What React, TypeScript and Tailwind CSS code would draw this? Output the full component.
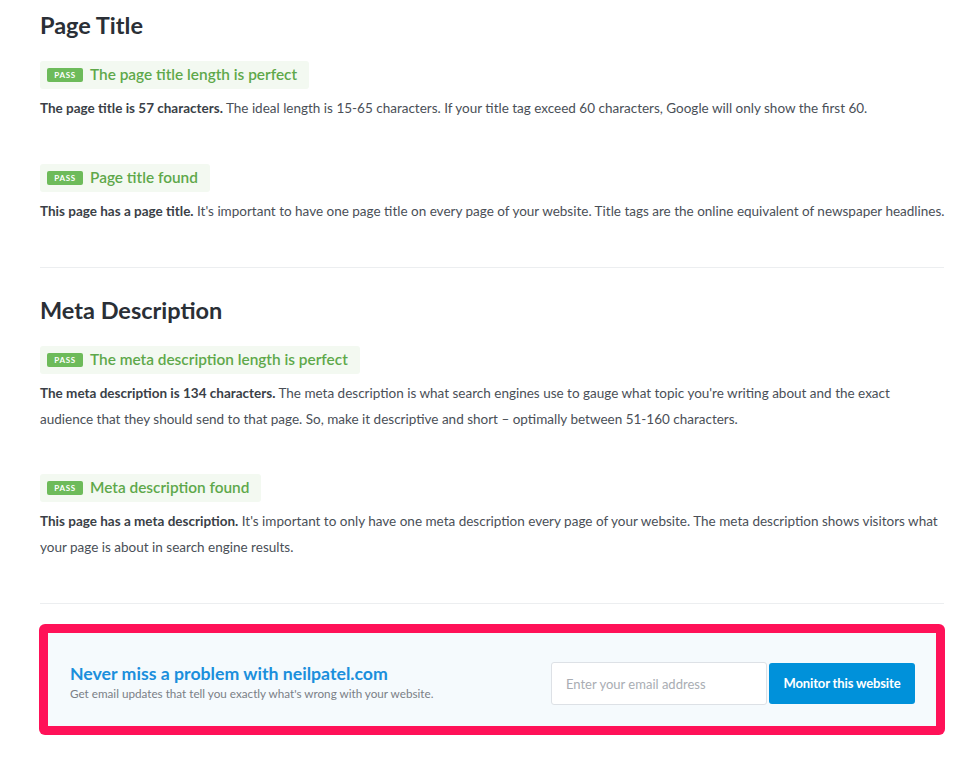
import React from "react";

type Check = { title: string; lead: string; body: string; nowrap?: boolean };

const sections: { heading: string; checks: Check[] }[] = [
  {
    heading: "Page Title",
    checks: [
      {
        title: "The page title length is perfect",
        lead: "The page title is 57 characters.",
        body: " The ideal length is 15-65 characters. If your title tag exceed 60 characters, Google will only show the first 60.",
      },
      {
        title: "Page title found",
        lead: "This page has a page title.",
        body: " It's important to have one page title on every page of your website. Title tags are the online equivalent of newspaper headlines.",
        nowrap: true,
      },
    ],
  },
  {
    heading: "Meta Description",
    checks: [
      {
        title: "The meta description length is perfect",
        lead: "The meta description is 134 characters.",
        body: " The meta description is what search engines use to gauge what topic you're writing about and the exact audience that they should send to that page. So, make it descriptive and short \u2013 optimally between 51-160 characters.",
      },
      {
        title: "Meta description found",
        lead: "This page has a meta description.",
        body: " It's important to only have one meta description every page of your website. The meta description shows visitors what your page is about in search engine results.",
      },
    ],
  },
];

function PassRow({ check, first }: { check: Check; first: boolean }) {
  return (
    <div className={first ? "" : "mt-[41px]"}>
      <div className="inline-flex items-center h-[28px] pl-[7px] pr-[12px] rounded-[3px] bg-[#f3f9f1]">
        <span className="flex items-center justify-center w-[36px] h-[14px] rounded-[2px] bg-[#6dbb5a] text-white text-[8px] font-bold tracking-[0.08em]">
          PASS
        </span>
        <span className="ml-[7px] text-[15.4px] font-semibold text-[#5ea84a] leading-none">{check.title}</span>
      </div>
      <p
        className={`mt-[7px] text-[13.5px] leading-[25.5px] text-[#4a4f57] ${check.nowrap ? "whitespace-nowrap" : ""}`}
      >
        <span className="font-bold text-[#3a3f47]">{check.lead}</span>
        {check.body}
      </p>
    </div>
  );
}

export default function App() {
  return (
    <div className="min-h-screen bg-white pl-[40px] pr-[36px] pt-[10px] font-['Lato','Liberation_Sans',sans-serif]">
      {sections.map((s, i) => (
        <div key={s.heading}>
          <div className={i === 0 ? "" : "mt-[27px]"}>
            <h2 className="text-[23.5px] leading-[30px] font-bold text-[#2a2f36]">{s.heading}</h2>
            <div className="mt-[20px]">
              {s.checks.map((c, j) => (
                <PassRow key={c.title} check={c} first={j === 0} />
              ))}
            </div>
          </div>
          <div className="mt-[43px] border-t border-[#eceef0]" />
        </div>
      ))}

      <div className="mt-[20px] -ml-px w-[906px] rounded-[6px] bg-[#ff1158] p-[9px]">
        <div className="flex items-start justify-between h-[93px] bg-[#f5fafd] pl-[22px] pr-[21px] pt-[29px]">
          <div className="mt-[1px]">
            <div className="text-[17.7px] font-bold text-[#1b8fdc] leading-[22px]">Never miss a problem with neilpatel.com</div>
            <div className="text-[11.7px] text-[#7a7f86] leading-[16px]">Get email updates that tell you exactly what's wrong with your website.</div>
          </div>
          <div className="flex items-center gap-[2px]">
            <input
              placeholder="Enter your email address"
              className="w-[216px] h-[43px] rounded-[3px] border border-[#dde1e6] bg-white px-[14px] text-[13px] placeholder:text-[#a9adb3] outline-none"
            />
            <button className="w-[146px] h-[41px] rounded-[3px] bg-[#0091da] text-white text-[13px] font-bold tracking-[-0.01em]">
              Monitor this website
            </button>
          </div>
        </div>
      </div>
    </div>
  );
}
